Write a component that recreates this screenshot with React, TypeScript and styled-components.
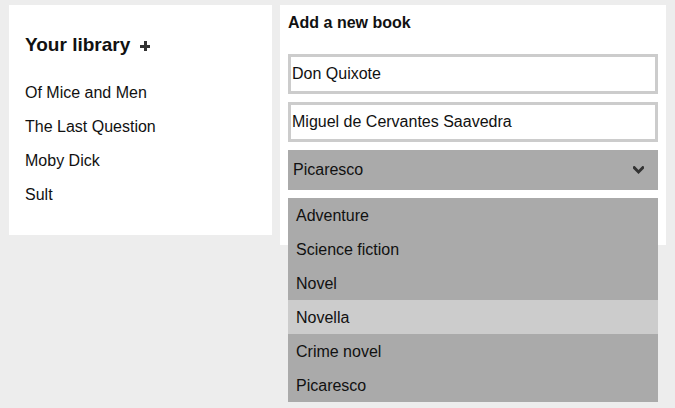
import React from "react";
import styled, { createGlobalStyle } from "styled-components";

const Global = createGlobalStyle`
  html, body { margin: 0; padding: 0; background: #ededed; }
  body { font-family: "Liberation Sans", Arial, Helvetica, sans-serif; color: #111; }
  * { box-sizing: border-box; }
`;

const Page = styled.div`
  display: flex;
  align-items: flex-start;
  gap: 8px;
  padding: 5px 0 0 9px;
  width: 675px;
  height: 408px;
`;

const LibraryCard = styled.section`
  width: 263px;
  height: 230px;
  background: #fff;
  padding: 28px 16px 0 16px;
`;

const LibraryTitle = styled.h2`
  margin: 0 0 19px;
  font-size: 19px;
  line-height: 24px;
  font-weight: bold;
  display: flex;
  align-items: center;
  gap: 10px;
`;

const Plus = styled.span`
  display: inline-block;
  position: relative;
  width: 10px;
  height: 10px;
  margin-top: 2px;
  &::before, &::after {
    content: "";
    position: absolute;
    background: #333;
  }
  &::before { left: 0; top: 4px; width: 10px; height: 2.5px; }
  &::after { left: 4px; top: 0; width: 2.5px; height: 10px; }
`;

const BookList = styled.ul`
  list-style: none;
  margin: 0;
  padding: 0;
`;

const BookItem = styled.li`
  font-size: 16px;
  line-height: 34px;
`;

const FormCard = styled.section`
  width: 386px;
  height: 240px;
  background: #fff;
  padding: 9px 8px 0 8px;
  display: flex;
  flex-direction: column;
  gap: 8px;
`;

const FormTitle = styled.h3`
  margin: 0 0 14px;
  font-size: 16px;
  line-height: 18px;
  font-weight: bold;
`;

const TextInput = styled.input`
  width: 370px;
  height: 40px;
  border: 3px solid #cccccc;
  padding: 0 1px;
  font-family: inherit;
  font-size: 16px;
  color: #111;
  background: #fff;
  outline: none;
`;

const SelectWrap = styled.div`
  position: relative;
  width: 370px;
`;

const SelectBox = styled.div`
  height: 40px;
  background: #aaaaaa;
  display: flex;
  align-items: center;
  justify-content: space-between;
  padding: 0 14px 0 5px;
  font-size: 16px;
`;

const Menu = styled.ul`
  position: absolute;
  top: 48px;
  left: 0;
  width: 370px;
  margin: 0;
  padding: 0;
  list-style: none;
  background: #aaaaaa;
`;

const MenuItem = styled.li<{ $active?: boolean }>`
  height: 34px;
  padding: 2px 0 0 8px;
  line-height: 32px;
  font-size: 16px;
  background: ${(p) => (p.$active ? "#cccccc" : "#aaaaaa")};
`;

const Chevron = () => (
  <svg width="11" height="8" viewBox="0 0 11 8" aria-hidden="true">
    <path d="M1.2 1.6 L5.5 5.9 L9.8 1.6" fill="none" stroke="#333" strokeWidth="2.8" strokeLinecap="square" />
  </svg>
);

const books = ["Of Mice and Men", "The Last Question", "Moby Dick", "Sult"];
const genres = ["Adventure", "Science fiction", "Novel", "Novella", "Crime novel", "Picaresco"];

export default function App() {
  return (
    <>
      <Global />
      <Page>
        <LibraryCard>
          <LibraryTitle>
            Your library <Plus />
          </LibraryTitle>
          <BookList>
            {books.map((b) => (
              <BookItem key={b}>{b}</BookItem>
            ))}
          </BookList>
        </LibraryCard>
        <FormCard>
          <FormTitle>Add a new book</FormTitle>
          <TextInput defaultValue="Don Quixote" />
          <TextInput defaultValue="Miguel de Cervantes Saavedra" />
          <SelectWrap>
            <SelectBox>
              <span>Picaresco</span>
              <Chevron />
            </SelectBox>
            <Menu>
              {genres.map((g) => (
                <MenuItem key={g} $active={g === "Novella"}>
                  {g}
                </MenuItem>
              ))}
            </Menu>
          </SelectWrap>
        </FormCard>
      </Page>
    </>
  );
}
